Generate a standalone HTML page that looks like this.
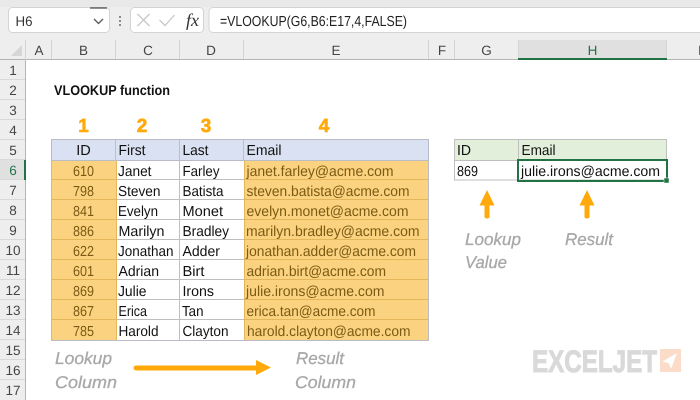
<!DOCTYPE html>
<html><head><meta charset="utf-8">
<style>
html,body{margin:0;padding:0;width:700px;height:400px;overflow:hidden;background:#fff}
svg{display:block}
text{font-family:"Liberation Sans",sans-serif;font-size:14.5px;fill:#111;text-rendering:geometricPrecision}
.h{fill:#444;font-size:13.5px}
.o{fill:#7b5a14}
.w{fill:#a8a8a8;font-style:italic;font-size:17px;stroke:#a8a8a8;stroke-width:.3}
.n{fill:#ffa90a;font-weight:bold;font-size:19px;text-anchor:middle;stroke:#ffa90a;stroke-width:.6}
</style></head><body>
<svg width="700" height="400" viewBox="0 0 700 400" xmlns="http://www.w3.org/2000/svg">
<!-- toolbar -->
<rect width="700" height="60" fill="#eeeeee"/>
<rect width="700" height="7" fill="#e9e9e9"/>
<rect x="209" y="7.5" width="500" height="25" rx="4" fill="#fff" stroke="#d4d4d4"/>
<rect x="8.5" y="7.5" width="101" height="25" rx="4" fill="#fff" stroke="#d4d4d4"/>
<rect x="130.5" y="7.5" width="73" height="25" rx="4" fill="#fff" stroke="#d4d4d4"/>
<path d="M90 8H107" stroke="#222" stroke-width="1"/>
<text x="15.5" y="26" textLength="17" lengthAdjust="spacingAndGlyphs" style="font-size:14px;fill:#333">H6</text>
<path d="M94 19l4.500 4.500 4.500-4.500" fill="none" stroke="#555" stroke-width="1.300"/>
<path d="M120 16v2M120 20v2M120 24v2" stroke="#8a8a8a" stroke-width="2"/>
<path d="M137.500 14l12 12M149.500 14l-12 12" stroke="#c8c8c8" stroke-width="1.300"/>
<path d="M159.500 20l5.500 5.500 9.500-10.500" fill="none" stroke="#c8c8c8" stroke-width="1.300"/>
<text x="186" y="26" style="font-family:'Liberation Serif',serif;font-style:italic;font-size:18px;fill:#333">fx</text>
<text x="220" y="26" textLength="187" lengthAdjust="spacingAndGlyphs" style="font-size:14.5px;fill:#222">=VLOOKUP(G6,B6:E17,4,FALSE)</text>
<!-- column headers -->
<rect x="0" y="40" width="700" height="20" fill="#eeeeee"/>
<path d="M22 45v11h-11z" fill="#d6d6d6"/>
<rect x="518" y="40" width="148.500" height="20" fill="#e0e0e0"/>
<path d="M0 59.500H700" stroke="#b4b4b4"/>
<path d="M25.500 40v20M51.500 40v19M115.500 40v19M179.500 40v19M243.500 40v19M428.500 40v19M454.500 40v19M518.500 40v19M666.500 40v19" stroke="#d4d4d4"/>
<rect x="518" y="58" width="149" height="2" fill="#217346"/>
<text class="h" x="39" y="55" text-anchor="middle">A</text>
<text class="h" x="83.500" y="55" text-anchor="middle">B</text>
<text class="h" x="148" y="55" text-anchor="middle">C</text>
<text class="h" x="211" y="55" text-anchor="middle">D</text>
<text class="h" x="336" y="55" text-anchor="middle">E</text>
<text class="h" x="442" y="55" text-anchor="middle">F</text>
<text class="h" x="486.500" y="55" text-anchor="middle">G</text>
<text class="h" x="592.500" y="55" text-anchor="middle" style="fill:#217346">H</text>
<text class="h" x="698" y="55" style="fill:#444">I</text>
<!-- row headers -->
<rect x="0" y="60" width="26" height="340" fill="#eeeeee"/>
<rect x="0" y="160" width="24" height="20" fill="#e0e0e0"/>
<path d="M25.500 60V400" stroke="#b4b4b4"/>
<path d="M0 79.500H25M0 99.500H25M0 119.500H25M0 139.500H25M0 159.500H25M0 179.500H25M0 199.500H25M0 219.500H25M0 239.500H25M0 259.500H25M0 279.500H25M0 299.500H25M0 319.500H25M0 339.500H25M0 359.500H25M0 379.500H25" stroke="#d9d9d9"/>
<rect x="24" y="160" width="2" height="20" fill="#217346"/>
<text class="h" x="13" y="75" text-anchor="middle">1</text>
<text class="h" x="13" y="95" text-anchor="middle">2</text>
<text class="h" x="13" y="115" text-anchor="middle">3</text>
<text class="h" x="13" y="135" text-anchor="middle">4</text>
<text class="h" x="13" y="155" text-anchor="middle">5</text>
<text class="h" x="13" y="175" text-anchor="middle" style="fill:#217346">6</text>
<text class="h" x="13" y="195" text-anchor="middle">7</text>
<text class="h" x="13" y="215" text-anchor="middle">8</text>
<text class="h" x="13" y="235" text-anchor="middle">9</text>
<text class="h" x="13" y="255" text-anchor="middle">10</text>
<text class="h" x="13" y="275" text-anchor="middle">11</text>
<text class="h" x="13" y="295" text-anchor="middle">12</text>
<text class="h" x="13" y="315" text-anchor="middle">13</text>
<text class="h" x="13" y="335" text-anchor="middle">14</text>
<text class="h" x="13" y="355" text-anchor="middle">15</text>
<text class="h" x="13" y="375" text-anchor="middle">16</text>
<text class="h" x="13" y="395" text-anchor="middle">17</text>
<!-- title -->
<text x="54" y="95" textLength="116" lengthAdjust="spacingAndGlyphs" style="font-weight:bold;font-size:14px">VLOOKUP function</text>
<!-- column numbers -->
<text class="n" x="83.500" y="132">1</text>
<text class="n" x="142" y="132">2</text>
<text class="n" x="206" y="132">3</text>
<text class="n" x="324" y="132">4</text>
<!-- table fills -->
<rect x="52" y="140" width="376.500" height="20" fill="#d9e1f2"/>
<rect x="52" y="160" width="64" height="180" fill="#fbd27f"/>
<rect x="244" y="160" width="184.500" height="180" fill="#fbd27f"/>
<!-- table grid -->
<path d="M116 179.500H244M116 199.500H244M116 219.500H244M116 239.500H244M116 259.500H244M116 279.500H244M116 299.500H244M116 319.500H244" stroke="#bfbfbf"/>
<path d="M52 179.500H116M244 179.500H428M52 199.500H116M244 199.500H428M52 219.500H116M244 219.500H428M52 239.500H116M244 239.500H428M52 259.500H116M244 259.500H428M52 279.500H116M244 279.500H428M52 299.500H116M244 299.500H428M52 319.500H116M244 319.500H428" stroke="#e3b65c"/>
<path d="M116.500 160V340M244.500 160V340" stroke="#e3b65c"/>
<path d="M179.500 140V340" stroke="#bfbfbf"/>
<path d="M115.500 140V160M243.500 140V160" stroke="#bfbfbf"/>
<rect x="51.500" y="139.500" width="377" height="201" fill="none" stroke="#b9bcc4"/>
<path d="M52 160.500H428" stroke="#b9bcc4"/>
<!-- table header text -->
<text x="83.500" y="155" text-anchor="middle">ID</text>
<text x="118.500" y="155" textLength="27" lengthAdjust="spacingAndGlyphs">First</text>
<text x="182.500" y="155" textLength="26" lengthAdjust="spacingAndGlyphs">Last</text>
<text x="246.500" y="155" textLength="35" lengthAdjust="spacingAndGlyphs">Email</text>
<!-- rows -->
<text class="o" x="73" y="176" textLength="21" lengthAdjust="spacingAndGlyphs">610</text><text x="118" y="176" textLength="33.500" lengthAdjust="spacingAndGlyphs">Janet</text><text x="182.500" y="176" textLength="37" lengthAdjust="spacingAndGlyphs">Farley</text><text class="o" x="246.500" y="176" textLength="147" lengthAdjust="spacingAndGlyphs">janet.farley@acme.com</text>
<text class="o" x="73" y="196" textLength="21" lengthAdjust="spacingAndGlyphs">798</text><text x="118" y="196" textLength="42.500" lengthAdjust="spacingAndGlyphs">Steven</text><text x="182.500" y="196" textLength="41" lengthAdjust="spacingAndGlyphs">Batista</text><text class="o" x="246.500" y="196" textLength="163" lengthAdjust="spacingAndGlyphs">steven.batista@acme.com</text>
<text class="o" x="73" y="216" textLength="21" lengthAdjust="spacingAndGlyphs">841</text><text x="118" y="216" textLength="40" lengthAdjust="spacingAndGlyphs">Evelyn</text><text x="182.500" y="216" textLength="40.500" lengthAdjust="spacingAndGlyphs">Monet</text><text class="o" x="246.500" y="216" textLength="162" lengthAdjust="spacingAndGlyphs">evelyn.monet@acme.com</text>
<text class="o" x="73" y="236" textLength="21" lengthAdjust="spacingAndGlyphs">886</text><text x="118.500" y="236" textLength="46" lengthAdjust="spacingAndGlyphs">Marilyn</text><text x="182.500" y="236" textLength="46.500" lengthAdjust="spacingAndGlyphs">Bradley</text><text class="o" x="246" y="236" textLength="173.500" lengthAdjust="spacingAndGlyphs">marilyn.bradley@acme.com</text>
<text class="o" x="73" y="256" textLength="21" lengthAdjust="spacingAndGlyphs">622</text><text x="118" y="256" textLength="55.500" lengthAdjust="spacingAndGlyphs">Jonathan</text><text x="182.500" y="256" textLength="37.500" lengthAdjust="spacingAndGlyphs">Adder</text><text class="o" x="246" y="256" textLength="170" lengthAdjust="spacingAndGlyphs">jonathan.adder@acme.com</text>
<text class="o" x="73" y="276" textLength="21" lengthAdjust="spacingAndGlyphs">601</text><text x="118.500" y="276" textLength="40.500" lengthAdjust="spacingAndGlyphs">Adrian</text><text x="182.500" y="276" textLength="22" lengthAdjust="spacingAndGlyphs">Birt</text><text class="o" x="246.500" y="276" textLength="139.500" lengthAdjust="spacingAndGlyphs">adrian.birt@acme.com</text>
<text class="o" x="73" y="296" textLength="21" lengthAdjust="spacingAndGlyphs">869</text><text x="118" y="296" textLength="28.500" lengthAdjust="spacingAndGlyphs">Julie</text><text x="182.500" y="296" textLength="31.500" lengthAdjust="spacingAndGlyphs">Irons</text><text class="o" x="246" y="296" textLength="138.500" lengthAdjust="spacingAndGlyphs">julie.irons@acme.com</text>
<text class="o" x="73" y="316" textLength="21" lengthAdjust="spacingAndGlyphs">867</text><text x="118.500" y="316" textLength="28.500" lengthAdjust="spacingAndGlyphs">Erica</text><text x="182" y="316" textLength="21.500" lengthAdjust="spacingAndGlyphs">Tan</text><text class="o" x="246.500" y="316" textLength="129" lengthAdjust="spacingAndGlyphs">erica.tan@acme.com</text>
<text class="o" x="73" y="336" textLength="21" lengthAdjust="spacingAndGlyphs">785</text><text x="118.500" y="336" textLength="40" lengthAdjust="spacingAndGlyphs">Harold</text><text x="182.500" y="336" textLength="46" lengthAdjust="spacingAndGlyphs">Clayton</text><text class="o" x="247" y="336" textLength="163.500" lengthAdjust="spacingAndGlyphs">harold.clayton@acme.com</text>
<!-- right table -->
<rect x="454" y="140" width="212.500" height="20" fill="#e2efda"/>
<rect x="454.500" y="139.500" width="212" height="40.500" fill="none" stroke="#bfbfbf"/>
<path d="M518.500 140V180M454 160.500H667" stroke="#bfbfbf"/>
<text x="457" y="155" textLength="14" lengthAdjust="spacingAndGlyphs">ID</text>
<text x="521.500" y="155" textLength="34" lengthAdjust="spacingAndGlyphs">Email</text>
<text x="457" y="176" textLength="21" lengthAdjust="spacingAndGlyphs">869</text>
<text x="521" y="176" textLength="139" lengthAdjust="spacingAndGlyphs">julie.irons@acme.com</text>
<rect x="518" y="160" width="149" height="21" fill="none" stroke="#217346" stroke-width="2"/>
<rect x="664" y="178" width="5" height="5" fill="#217346" stroke="#fff" stroke-width=".5"/>
<!-- arrows -->
<path d="M487 190l7.500 15.500h-5v11.500a2.500 1.500 0 0 1-5 0v-11.500h-5z" fill="#ffa90a"/>
<path d="M587 190l7.500 15.500h-5v11.500a2.500 1.500 0 0 1-5 0v-11.500h-5z" fill="#ffa90a"/>
<path d="M136 365.500h120v-5.500l15 7.500-15 7.500v-4.500h-120a2.500 2.500 0 0 1 0-5z" fill="#ffa90a"/>
<!-- notes -->
<text class="w" x="465" y="245" textLength="56" lengthAdjust="spacingAndGlyphs">Lookup</text>
<text class="w" x="465" y="268" textLength="42" lengthAdjust="spacingAndGlyphs">Value</text>
<text class="w" x="565" y="245" textLength="48" lengthAdjust="spacingAndGlyphs">Result</text>
<text class="w" x="55" y="364" textLength="57" lengthAdjust="spacingAndGlyphs">Lookup</text>
<text class="w" x="55" y="388" textLength="62" lengthAdjust="spacingAndGlyphs">Column</text>
<text class="w" x="296" y="364" textLength="48" lengthAdjust="spacingAndGlyphs">Result</text>
<text class="w" x="295" y="388" textLength="61" lengthAdjust="spacingAndGlyphs">Column</text>
<!-- logo -->
<text x="532" y="372" textLength="125" lengthAdjust="spacingAndGlyphs" style="font-weight:bold;font-size:31px;fill:#d9d9d9;stroke:#d9d9d9;stroke-width:1">EXCELJET</text>
<rect x="660" y="349" width="21" height="23" fill="#fbdcc8"/>
<path d="M677 353L662.500 361.500 669 363.500 671 369z" fill="#fff"/>
</svg>
</body></html>
